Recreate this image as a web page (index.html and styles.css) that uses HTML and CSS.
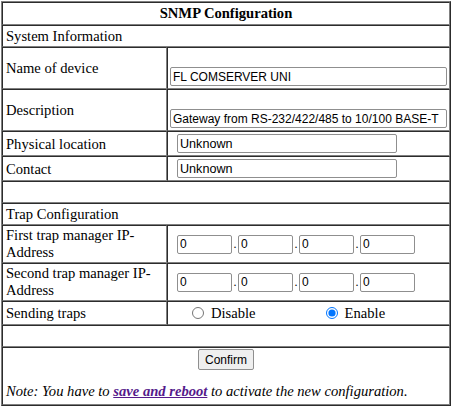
FILE: index.html
```html
<!DOCTYPE html>
<html>
<head>
<meta charset="utf-8">
<title>SNMP Configuration</title>
<link rel="stylesheet" href="styles.css">
</head>
<body>
<table class="cfg">
  <colgroup><col class="c1"><col class="c2"></colgroup>
  <tr><th colspan="2" class="title">SNMP Configuration</th></tr>
  <tr><td colspan="2" class="lbl">System Information</td></tr>
  <tr>
    <td class="lbl">Name of device</td>
    <td class="val"><input class="wide tall" type="text" value="FL COMSERVER UNI"></td>
  </tr>
  <tr>
    <td class="lbl">Description</td>
    <td class="val"><input class="wide tall" type="text" value="Gateway from RS-232/422/485 to 10/100 BASE-T"></td>
  </tr>
  <tr>
    <td class="lbl">Physical location</td>
    <td class="val"><input class="mid" type="text" value="Unknown"></td>
  </tr>
  <tr>
    <td class="lbl">Contact</td>
    <td class="val"><input class="mid" type="text" value="Unknown"></td>
  </tr>
  <tr><td colspan="2" class="lbl">&nbsp;</td></tr>
  <tr><td colspan="2" class="lbl">Trap Configuration</td></tr>
  <tr>
    <td class="lbl two">First trap manager IP-Address</td>
    <td class="val">
      <div class="ip">
        <input type="text" value="0"><span class="dot">.</span><input type="text" value="0"><span class="dot">.</span><input type="text" value="0"><span class="dot">.</span><input type="text" value="0">
      </div>
    </td>
  </tr>
  <tr>
    <td class="lbl two">Second trap manager IP-Address</td>
    <td class="val">
      <div class="ip">
        <input type="text" value="0"><span class="dot">.</span><input type="text" value="0"><span class="dot">.</span><input type="text" value="0"><span class="dot">.</span><input type="text" value="0">
      </div>
    </td>
  </tr>
  <tr>
    <td class="lbl">Sending traps</td>
    <td class="val">
      <div class="radios">
        <label class="opt opt-dis"><input type="radio" name="traps"><span>Disable</span></label>
        <label class="opt opt-en"><input type="radio" name="traps" checked><span>Enable</span></label>
      </div>
    </td>
  </tr>
  <tr><td colspan="2" class="lbl">&nbsp;</td></tr>
  <tr>
    <td colspan="2" class="foot">
      <div class="actions"><button type="button">Confirm</button></div>
      <p class="note">Note: You have to <a href="#">save and reboot</a> to activate the new configuration.</p>
    </td>
  </tr>
</table>
</body>
</html>
```

FILE: styles.css
```css
html, body {
  margin: 0;
  padding: 0;
  background: #ffffff;
}
body {
  padding: 1px 0 0 1px;
  font-family: "Liberation Serif", "Times New Roman", serif;
  font-size: 14.6px;
  color: #000000;
}
.cfg {
  width: 450px;
  table-layout: fixed;
  border-collapse: separate;
  border-spacing: 0;
  border: 1px outset #808080;
}
.c1 { width: 165px; }
.cfg th, .cfg td {
  border: 1px inset #808080;
  padding: 1px 2px;
  line-height: 18px;
  vertical-align: middle;
}
.cfg .title {
  font-weight: bold;
  text-align: center;
  line-height: 19px;
}
.cfg .lbl {
  padding-left: 3px;
  text-align: left;
}
.cfg .two {
  line-height: 17px;
}
.cfg input[type="text"] {
  display: block;
  box-sizing: border-box;
  height: 19px;
  margin: 1px 0;
  padding: 1px 2px;
  border: 1px solid #8f8f8f;
  border-radius: 2px;
  font-family: "Liberation Sans", Arial, sans-serif;
  font-size: 12px;
  color: #000000;
  background: #ffffff;
}
.cfg input.wide {
  width: 100%;
}
.cfg input.tall {
  margin-top: 18px;
}
.cfg input.mid {
  width: 220px;
  margin-left: 7px;
  font-size: 12.6px;
}
.ip {
  display: flex;
  align-items: baseline;
  padding-left: 7px;
}
.ip input[type="text"] {
  width: 55px;
}
.dot {
  width: 6px;
  text-align: center;
  font-size: 12px;
  line-height: 12px;
}
.radios {
  display: flex;
  align-items: center;
  height: 20px;
  padding-left: 22px;
}
.opt {
  display: flex;
  align-items: center;
}
.opt input[type="radio"] {
  width: 12px;
  height: 12px;
  margin: 0 7px 0 0;
}
.opt-en {
  margin-left: 70px;
}
.foot {
  text-align: center;
}
.actions {
  display: flex;
  justify-content: center;
}
.actions button {
  box-sizing: border-box;
  height: 21px;
  padding: 1px 6px;
  border: 1px solid #8f8f8f;
  border-radius: 2px;
  background: #efefef;
  font-family: "Liberation Sans", Arial, sans-serif;
  font-size: 12px;
  color: #000000;
}
.note {
  margin: 12px 0 3px;
  padding-left: 1px;
  text-align: left;
  font-style: italic;
  line-height: 18px;
}
.note a {
  color: #551a8b;
  font-weight: bold;
  text-decoration: underline;
}
```
